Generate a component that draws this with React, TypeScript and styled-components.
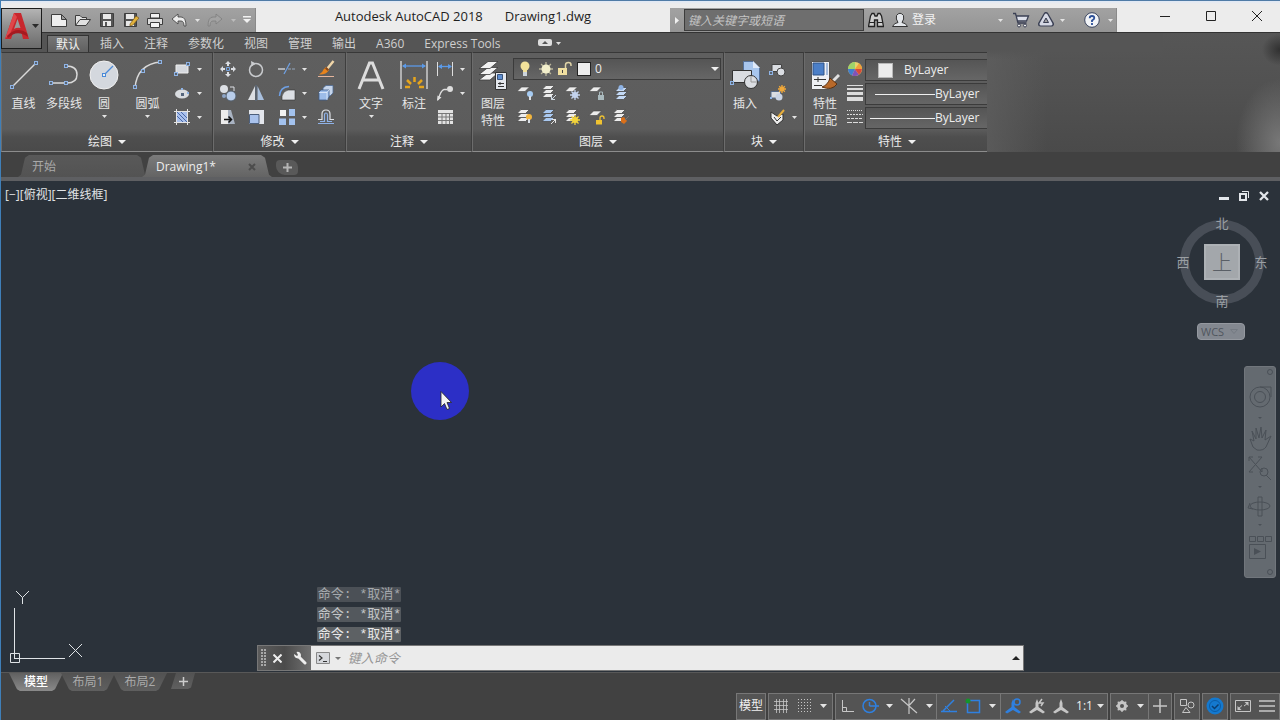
import React from "react";
import styled, { createGlobalStyle, css } from "styled-components";

const Global = createGlobalStyle`
  * { box-sizing: border-box; }
  html, body, #root { height: 100%; }
  body {
    margin: 0;
    background: #414141;
    font-family: "Open Sans", "Noto Sans CJK SC", sans-serif;
    font-size: 12px;
    line-height: 16px;
    color: #e0e0e0;
    overflow: hidden;
  }
  button, input, select {
    font: inherit;
    color: inherit;
    background: none;
    border: 0;
    padding: 0;
    margin: 0;
    appearance: none;
    outline: none;
  }
`;

/* ---------- frame ---------- */

const Window = styled.div`
  display: flex;
  flex-direction: column;
  height: 100vh;
  border-left: 1px solid #3f7fb8;
  border-top: 1px solid #4f7ba6;
`;

const TitleBar = styled.header`
  position: relative;
  display: flex;
  align-items: flex-end;
  height: 31px;
  flex: none;
  background: linear-gradient(#dfe8f6, #ececec 3px);
`;

const AppButton = styled.button`
  position: absolute;
  left: 0;
  top: 7px;
  z-index: 2;
  display: flex;
  align-items: center;
  gap: 2px;
  width: 41px;
  height: 41px;
  padding: 0 0 6px 3px;
  border: 1px solid #1c1c1c;
  background: linear-gradient(#b4b4b4, #8e8e8e 45%, #6c6c6c);
`;

const QuickBar = styled.div`
  display: flex;
  height: 24px;
  margin-left: 41px;
  padding-left: 5px;
  background: linear-gradient(#a2a2a2, #949494);
  border-right: 1px solid #8a8a8a;
`;

const ToolButton = styled.button<{ $w?: number }>`
  display: flex;
  align-items: center;
  justify-content: center;
  width: ${(p) => p.$w ?? 24}px;
  height: 24px;
  flex: none;
`;

const Title = styled.h1`
  display: flex;
  flex: 1;
  justify-content: center;
  gap: 22px;
  height: 24px;
  margin: 0;
  font-size: 13px;
  line-height: 16px;
  font-weight: 400;
  color: #1e1e1e;
  white-space: nowrap;
`;

const InfoBar = styled.div`
  display: flex;
  align-items: center;
  height: 24px;
  background: linear-gradient(#a2a2a2, #949494);
  border-right: 1px solid #8a8a8a;
`;

const SearchInput = styled.input`
  width: 180px;
  height: 22px;
  padding: 0 3px;
  background: #6e6e6e;
  border: 1px solid #3c3c3c;
  font-style: italic;
  &::placeholder { color: #c4c4c4; opacity: 1; }
`;

const SignIn = styled.button`
  width: 82px;
  height: 24px;
  text-align: left;
  color: #f2f2f2;
`;

const HelpGroup = styled.div`
  display: flex;
  margin-left: 12px;
`;

const WindowButtons = styled.div`
  display: flex;
  height: 31px;
  margin-left: 25px;
`;

const WindowButton = styled.button`
  display: flex;
  align-items: center;
  justify-content: center;
  width: 46px;
  height: 29px;
`;

/* ---------- ribbon ---------- */

const RibbonTabs = styled.nav`
  display: flex;
  align-items: flex-end;
  height: 20px;
  flex: none;
  padding-left: 46px;
  background: #555555;
  border-top: 1px solid #333;
`;

const RibbonTab = styled.button<{ $active?: boolean }>`
  height: 19px;
  padding: 0 8px;
  margin-right: 2px;
  line-height: 17px;
  color: #cfcfcf;
  border: 1px solid transparent;
  border-bottom: 0;
  white-space: nowrap;
  ${(p) =>
    p.$active &&
    css`
      height: 17px;
      color: #f2f2f2;
      background: linear-gradient(#767676, #606060);
      border-color: #333;
      line-height: 15px;
    `}
`;

const CollapseButton = styled.button`
  display: flex;
  align-items: center;
  height: 19px;
  padding: 0 20px 0 26px;
`;

const Ribbon = styled.div`
  display: flex;
  height: 100px;
  flex: none;
  background: #4f4f4f;
`;

const Panel = styled.section<{ $w: number }>`
  display: flex;
  flex-direction: column;
  width: ${(p) => p.$w}px;
  flex: none;
  border-top: 1px solid #383838;
  border-left: 1px solid #6c6c6c;
  border-right: 1px solid #3e3e3e;
  border-bottom: 1px solid #8c8c8c;
  background: linear-gradient(#5f5f5f, #5c5c5c 76px, #4e4e4e 84px, #4a4a4a);
  overflow: hidden;
`;

const PanelBody = styled.div`
  display: flex;
  flex: 1;
  padding-top: 4px;
`;

const PanelTitle = styled.button`
  display: flex;
  align-items: center;
  justify-content: center;
  gap: 6px;
  height: 20px;
  padding-top: 2px;
  line-height: 18px;
  color: #ececec;
`;

const BigButton = styled.button<{ $w?: number }>`
  display: flex;
  flex-direction: column;
  align-items: center;
  width: ${(p) => p.$w ?? 40}px;
  height: 74px;
  flex: none;
  padding-top: 2px;
  color: #e6e6e6;
  white-space: nowrap;
`;

const BigLabel = styled.span`
  margin: 4px 0 3px;
  line-height: 17px;
`;

const Column = styled.div`
  display: flex;
  flex-direction: column;
`;

const Row = styled.div`
  display: flex;
  align-items: center;
  height: 24px;
`;

const ModifyGrid = styled.div`
  display: grid;
  grid-template-columns: 28px 28px 38px 36px;
  grid-auto-rows: 24px;
  align-items: center;
  justify-items: center;
`;

const Combo = styled.label<{ $w?: number }>`
  display: flex;
  align-items: center;
  gap: 3px;
  height: 22px;
  margin: 1px 0;
  padding: 0 1px 0 3px;
  ${(p) => (p.$w ? `width: ${p.$w}px;` : "flex: 1;")}
  background: linear-gradient(#555, #666);
  border: 1px solid #3b3b3b;
  select { flex: 1; min-width: 0; height: 20px; color: #eee; }
`;

const PropertyCombo = styled(Combo)`
  flex: none;
  width: 130px;
  gap: 0;
  margin: 2px 0 0;
  padding: 0 0 0 4px;
  border-right: 0;
`;

const Swatch = styled.span`
  width: 15px;
  height: 15px;
  margin: 0 11px 0 8px;
  background: #ececec;
  border: 1px solid #b8b8b8;
`;

const LineSample = styled.span<{ $inset: number }>`
  width: ${(p) => 65 - p.$inset}px;
  height: 1px;
  margin-left: ${(p) => p.$inset}px;
  background: #f0f0f0;
`;

const Haze = styled.div`
  flex: 1;
  margin: -20px 0 0 -3px;
  background:
    linear-gradient(#555 17px, rgba(85, 85, 85, 0) 26px) 0 0 / 60% 100% no-repeat,
    linear-gradient(90deg, rgba(96, 96, 96, 0.7), rgba(96, 96, 96, 0) 60px),
    radial-gradient(18px 16px at 100% 14%, #303030, rgba(48, 48, 48, 0)),
    radial-gradient(44px 64px at 100% 92%, #787878, rgba(90, 90, 90, 0)),
    linear-gradient(#565656, #515151 50%, #4a4a4a);
  border-top: 1px solid #333;
`;

/* ---------- document tabs ---------- */

const FileTabs = styled.nav`
  display: flex;
  align-items: flex-end;
  height: 29px;
  flex: none;
  padding: 0 0 0 17px;
  background: #414141;
  border-bottom: 4px solid #5e5f62;
`;

const FileTab = styled.div<{ $active?: boolean }>`
  display: flex;
  align-items: center;
  width: 130px;
  height: 22px;
  margin-right: -6px;
  padding: 1px 16px 0 14px;
  justify-content: space-between;
  color: ${(p) => (p.$active ? "#ededed" : "#a9a9a9")};
  background: ${(p) => (p.$active ? "linear-gradient(#7b7b7b, #646464)" : "linear-gradient(#595959, #535353)")};
  clip-path: polygon(0 100%, 3px 90%, 7px 12%, 11px 0, 119px 0, 123px 12%, 127px 90%, 100% 100%);
  button { color: inherit; }
`;

const AddTab = styled.button`
  display: flex;
  align-items: center;
  justify-content: center;
  width: 22px;
  height: 15px;
  margin: 0 0 2px 10px;
  background: #595959;
  border-radius: 4px 7px 4px 9px;
`;

/* ---------- drawing area ---------- */

const Canvas = styled.main`
  position: relative;
  flex: 1;
  min-height: 0;
  background: #2b323a;
  overflow: hidden;
`;

const ViewHeader = styled.div`
  display: flex;
  justify-content: space-between;
  padding: 6px 8px 0 4px;
`;

const ViewLabel = styled.span`
  color: #e2e4e6;
`;

const ViewButtons = styled.div`
  display: flex;
  align-items: center;
  gap: 4px;
  button { display: flex; align-items: center; justify-content: center; width: 16px; height: 18px; }
`;

const ViewCube = styled.div`
  position: absolute;
  right: 11px;
  top: 33px;
  display: grid;
  grid-template-columns: 16px 1fr 16px;
  grid-template-rows: 18px 1fr 18px;
  place-items: center;
  width: 94px;
  height: 96px;
  color: #9a9fa4;
  font-size: 13px;
`;

const CompassRing = styled.span`
  position: absolute;
  left: 5px;
  top: 6px;
  width: 84px;
  height: 84px;
  border: 9px solid #484e57;
  border-radius: 50%;
`;

const Compass = styled.span<{ $col: number; $row: number }>`
  position: relative;
  grid-column: ${(p) => p.$col};
  grid-row: ${(p) => p.$row};
`;

const CubeFace = styled.button`
  position: relative;
  grid-column: 2;
  grid-row: 2;
  width: 36px;
  height: 36px;
  background: #a3a7ab;
  border: 2px solid #adb1b5;
  color: #5a5f66;
  font-family: "Noto Sans CJK SC", sans-serif;
  font-size: 20px;
  font-weight: 300;
  line-height: 28px;
`;

const WcsButton = styled.button`
  position: absolute;
  right: 35px;
  top: 142px;
  display: flex;
  align-items: center;
  gap: 6px;
  width: 48px;
  height: 17px;
  padding-left: 3px;
  font-size: 11px;
  background: #838890;
  border: 1px solid #9599a0;
  border-radius: 4px;
  color: #50565e;
`;

const NavBar = styled.div`
  position: absolute;
  right: 4px;
  top: 185px;
  display: flex;
  flex-direction: column;
  align-items: center;
  width: 32px;
  height: 212px;
  background: #646a70;
  border: 1px solid #71767c;
  border-radius: 3px;
`;

const Ucs = styled.svg`
  position: absolute;
  left: 8px;
  bottom: 8px;
`;

const Pointer = styled.svg`
  position: absolute;
  left: 410px;
  top: 181px;
`;

const CommandDock = styled.form`
  position: absolute;
  left: 20%;
  bottom: 1px;
  width: 60%;
`;

const History = styled.ol`
  display: flex;
  flex-direction: column;
  align-items: flex-start;
  gap: 5px;
  margin: 0 0 3px 60px;
  padding: 0;
  list-style: none;
  font-family: "Liberation Mono", "Noto Sans CJK SC", monospace;
  font-size: 13px;
  line-height: 15px;
`;

const HistoryLine = styled.li<{ $fade: number }>`
  height: 15px;
  padding: 0 0 0 1px;
  white-space: pre;
  border-radius: 1px;
  background: ${(p) => ["#5d6164", "#53585d", "#4b5056"][p.$fade]};
  color: ${(p) => ["#e8e8e8", "#c3c6c8", "#a5a9ad"][p.$fade]};
`;

const CommandLine = styled.div`
  display: flex;
  align-items: center;
  height: 26px;
  background: #ebebeb;
  border: 1px solid #777;
`;

const CommandGrip = styled.div`
  display: flex;
  align-items: center;
  width: 53px;
  height: 24px;
  flex: none;
  padding-left: 3px;
  background: linear-gradient(90deg, #5c5c5c, #4b4b4b 50%, #707070);
  button { width: 22px; height: 24px; display: flex; align-items: center; justify-content: center; }
`;

const CommandInput = styled.input`
  flex: 1;
  min-width: 0;
  margin-left: 7px;
  font-family: "Noto Sans CJK SC", sans-serif;
  font-size: 13px;
  font-style: italic;
  color: #333;
  &::placeholder { color: #969696; opacity: 1; }
`;

/* ---------- bottom ---------- */

const Bottom = styled.footer`
  display: flex;
  flex-direction: column;
  height: 48px;
  flex: none;
  background: #414141;
  border-top: 1px solid #585858;
`;

const LayoutTabs = styled.nav`
  display: flex;
  height: 20px;
  padding-left: 8px;
`;

const LayoutTab = styled.button<{ $active?: boolean }>`
  width: 54px;
  height: 18px;
  margin-right: -2px;
  line-height: 18px;
  text-align: center;
  color: ${(p) => (p.$active ? "#fff" : "#aaa")};
  font-weight: ${(p) => (p.$active ? 500 : 400)};
  background: ${(p) => (p.$active ? "linear-gradient(#606060, #8a8a8a)" : "linear-gradient(#525252, #5f5f5f)")};
  clip-path: polygon(0 0, 100% 0, 46px 90%, 43px 100%, 11px 100%, 8px 90%);
`;

const AddLayout = styled(LayoutTab)`
  display: flex;
  align-items: center;
  justify-content: center;
  width: 24px;
  height: 16px;
  margin-left: 6px;
  clip-path: polygon(5px 0, 100% 0, 20px 90%, 17px 100%, 0 100%);
`;

const StatusBar = styled.div`
  display: flex;
  justify-content: flex-end;
  gap: 2px;
  height: 27px;
`;

const StatusCell = styled.div`
  display: flex;
  align-items: center;
  height: 27px;
  background: #545454;
  border: 1px solid #777;
  & + &.joined { margin-left: -3px; }
`;

const StatusButton = styled.button<{ $w?: number }>`
  display: flex;
  align-items: center;
  justify-content: center;
  gap: 4px;
  width: ${(p) => p.$w ?? 24}px;
  height: 25px;
  padding-bottom: 2px;
  color: #f0f0f0;
  white-space: nowrap;
`;

/* ---------- drawings ---------- */

const Svg = styled.svg`
  display: block;
  flex: none;
`;

type IconProps = { w?: number; h?: number; children: React.ReactNode };
const Icon = ({ w = 18, h = 18, children }: IconProps) => (
  <Svg width={w} height={h} viewBox={`0 0 ${w} ${h}`} fill="none" aria-hidden>
    {children}
  </Svg>
);

const Caret = ({ s = 5, c = "#e4e4e4", up = false }: { s?: number; c?: string; up?: boolean }) => {
  const h = Math.ceil(s / 2);
  return (
    <Icon w={s} h={h}>
      <path d={up ? `M0 ${h} L${s / 2} 0 L${s} ${h} Z` : `M0 0 H${s} L${s / 2} ${h} Z`} fill={c} />
    </Icon>
  );
};

const Knots = ({ at, r = 2 }: { at: [number, number][]; r?: number }) => (
  <g fill="#5a6470" stroke="#8fb4e6">
    {at.map(([x, y]) => (
      <rect key={`${x}-${y}`} x={x - r + 0.5} y={y - r + 0.5} width={r * 2 - 1} height={r * 2 - 1} />
    ))}
  </g>
);

const Sheets = ({ x = 0, y = 0, c = "#ececec" }: { x?: number; y?: number; c?: string }) => (
  <g transform={`translate(${x} ${y})`} fill={c} stroke="#4a4a4a" strokeWidth=".8">
    <path d="M4 8.500 H12.500 L8.500 12.500 H0 Z" />
    <path d="M4 4.500 H12.500 L8.500 8.500 H0 Z" />
    <path d="M4 .5 H12.500 L8.500 4.500 H0 Z" />
  </g>
);

const Sheet = () => <path d="M5.500 3 H13.500 L9 7.500 H1 Z" fill="#ececec" stroke="#444" strokeWidth=".6" />;

const Sun = ({ x, y, r, c }: { x: number; y: number; r: number; c: string }) => (
  <g transform={`translate(${x} ${y})`}>
    <path
      d={[0, 45, 90, 135]
        .map((a) => {
          const dx = Math.cos((a * Math.PI) / 180) * r;
          const dy = Math.sin((a * Math.PI) / 180) * r;
          return `M${-dx} ${-dy} L${dx} ${dy}`;
        })
        .join(" ")}
      stroke={c}
      strokeWidth="1.3"
    />
    <circle r={r * 0.6} fill={c} />
  </g>
);

const Bulb = ({ x, y, c }: { x: number; y: number; c: string }) => (
  <g transform={`translate(${x} ${y})`}>
    <circle r="3" fill={c} />
    <path d="M-1 2 H1 V6 H-1 Z" fill="#d7dde4" />
  </g>
);

const Padlock = ({ x, y, c }: { x: number; y: number; c: string }) => (
  <g transform={`translate(${x} ${y})`}>
    <rect x="0" y="4" width="6" height="4.500" fill={c} />
    <path d="M4 4 V2 Q4 0 6 0 Q8 0 8 2 V3" stroke={c} strokeWidth="1.300" />
  </g>
);

const Logo = () => (
  <Icon w={25} h={28}>
    <path d="M9 1 H16 L24 27 H18 L16.500 20.500 Q12 18.500 8 21 L6 27 H0 Z" fill="#c8272d" />
    <path d="M12.500 7 L15.500 16 Q12 15 9 17 Z" fill="#9b9b9b" />
    <path d="M9 1 L12 5 L5 22 L0 27 Z" fill="#e0474a" />
    <path d="M2 24 Q12 14 22 21 L23 25 Q12 17 3 26 Z" fill="#a51a20" />
  </Icon>
);

const dark = "#3d3d3d";
const quickIcons: [string, React.ReactNode][] = [
  ["新建", <path d="M1.500 3.500 H11.500 L16.500 8.500 V15.500 H1.500 Z M11.500 3.500 V8.500 H16.500" fill="#eee" stroke={dark} />],
  ["打开", <path d="M1.500 14.500 V4.500 H6 L8 6.500 H12.500 V8 M1.500 14.500 L6 8.500 H16.500 L12 14.500 Z" fill="#e0e0e0" stroke={dark} />],
  ["保存", <><path d="M2.500 2.500 H15.500 V15.500 H2.500 Z" fill="#555" stroke={dark} /><path d="M5 3 H13 V8 H5 Z M5 10 H13 V15 H5 Z" fill="#e8e8e8" /><path d="M7 11 H9 V15 H7 Z" fill="#555" /></>],
  ["另存为", <><path d="M2.500 2.500 H14.500 V15.500 H2.500 Z" fill="#555" stroke={dark} /><path d="M4 3 H12 V8 H4 Z M4 10 H12 V15 H4 Z" fill="#e8e8e8" /><path d="M8 13 L14 5 L17 7 L11 14 L8 15 Z" fill="#e2b23c" stroke="#6b4c10" strokeWidth=".6" /></>],
  ["打印", <><path d="M4.500 2.500 H13.500 V7 H4.500 Z" fill="#f3f3f3" stroke={dark} /><path d="M1.500 7.500 H16.500 V13.500 H1.500 Z" fill="#dedede" stroke={dark} /><path d="M4.500 11.500 H13.500 V16.500 H4.500 Z" fill="#f3f3f3" stroke={dark} /></>],
];

const Undo = ({ c = "#ececec", o = dark, flip = false }: { c?: string; o?: string; flip?: boolean }) => (
  <Icon w={18} h={18}>
    <path
      transform={flip ? "translate(18 0) scale(-1 1)" : undefined}
      d="M2 8 L8 3 V6 H11 Q16 6 16 15 H14 Q14 10 11 10 H8 V13 Z"
      fill={c}
      stroke={o}
      strokeWidth=".8"
    />
  </Icon>
);

const tabs = ["插入", "注释", "参数化", "视图", "管理", "输出", "A360", "Express Tools"];

const Split = ({ label, children, caret = true }: { label: string; children: React.ReactNode; caret?: boolean }) => (
  <Row>
    <ToolButton $w={23} aria-label={label}>{children}</ToolButton>
    {caret && <ToolButton $w={12} aria-label={`${label}选项`}><Caret /></ToolButton>}
  </Row>
);

const Titled = ({ w, title, children }: { w: number; title: string; children: React.ReactNode }) => (
  <Panel $w={w}>
    <PanelBody>{children}</PanelBody>
    <PanelTitle>{title}<Caret s={8} c="#f0f0f0" /></PanelTitle>
  </Panel>
);

const DrawPanel = () => (
  <Titled w={212} title="绘图">
    <BigButton $w={43}>
      <Icon w={30} h={32}><path d="M3 28 L27 4" stroke="#d9d9d9" strokeWidth="1.500" /><Knots at={[[3, 28], [27, 4]]} /></Icon>
      <BigLabel>直线</BigLabel>
    </BigButton>
    <BigButton $w={38}>
      <Icon w={32} h={32}><path d="M2 24 H19 Q29 24 29 15.500 Q29 7 18 7" stroke="#d9d9d9" strokeWidth="1.500" /><Knots at={[[3, 24], [18, 24], [18, 7]]} /></Icon>
      <BigLabel>多段线</BigLabel>
    </BigButton>
    <BigButton $w={42}>
      <Icon w={32} h={32}>
        <circle cx="16" cy="16" r="14" fill="#d4d8de" stroke="#f0f0f0" />
        <path d="M16 16 L25 7" stroke="#4a8ad8" strokeWidth="1.200" />
        <rect x="14.500" y="14.500" width="3" height="3" stroke="#4a8ad8" fill="#eee" />
      </Icon>
      <BigLabel>圆</BigLabel>
      <Caret />
    </BigButton>
    <BigButton $w={45}>
      <Icon w={32} h={32}><path d="M3 29 Q5 5 29 3" stroke="#d9d9d9" strokeWidth="1.500" /><Knots at={[[3, 28], [11, 12], [28, 3]]} /></Icon>
      <BigLabel>圆弧</BigLabel>
      <Caret />
    </BigButton>
    <Column>
      <Split label="矩形"><Icon><path d="M3 5 H15 V13 H3 Z" fill="#d5d8dd" stroke="#eee" /><Knots at={[[3, 14], [15, 4]]} /></Icon></Split>
      <Split label="椭圆"><Icon><ellipse cx="9" cy="10" rx="7" ry="4.500" fill="#d9dce0" /><Knots at={[[9, 5], [15, 9]]} r={1} /><path d="M8 9 H11 V12 H8 Z" fill="#54657d" /></Icon></Split>
      <Split label="图案填充"><Icon><path d="M4 4 H14 V14 H4 Z" fill="#a9c0ec" /><path d="M4 8 L10 14 M4 4 L14 14 M8 4 L14 10" stroke="#4868a8" /><path d="M3.500 1 V17 M14.500 1 V17 M1 3.500 H17 M1 14.500 H17" stroke="#e4e4e4" /></Icon></Split>
    </Column>
  </Titled>
);

const ModifyPanel = () => {
  const w = "#dcdfe4";
  return (
    <Titled w={133} title="修改">
      <ModifyGrid>
        <ToolButton aria-label="移动"><Icon><path d="M9 1 L12 4 H10 V6 H8 V4 H6 Z M9 17 L12 14 H10 V12 H8 V14 H6 Z M1 9 L4 6 V8 H6 V10 H4 V12 Z M17 9 L14 6 V8 H12 V10 H14 V12 Z" fill={w} /><path d="M7.500 7.500 H10.500 V10.500 H7.500 Z" stroke="#77a4e0" /></Icon></ToolButton>
        <ToolButton aria-label="旋转"><Icon><circle cx="9" cy="10" r="6.500" stroke="#c9cbce" strokeWidth="1.500" /><path d="M4 1 L9 3.500 L4.500 6.500 Z" fill="#c9cbce" /></Icon></ToolButton>
        <Row><ToolButton $w={30} aria-label="修剪"><Icon><path d="M0 9 H7" stroke={w} strokeWidth="1.300" /><path d="M10 9 H18" stroke="#94a7bd" strokeDasharray="3 1" /><path d="M6 14 L12 3" stroke="#6f9fe0" strokeWidth="1.300" /></Icon></ToolButton><Caret /></Row>
        <ToolButton aria-label="删除"><Icon><path d="M16.500 1 L10 9" stroke="#f0d6a8" strokeWidth="2.500" /><path d="M9 7 L12 10 Q9 15 2 14.500 Q6 12 6.500 9.500 Z" fill="#e8841c" /><path d="M9.500 7 L12 9.500 L10.500 11 L8 8.500 Z" fill="#8a4a1c" /><path d="M1 16.500 H17" stroke="#e5b59c" /></Icon></ToolButton>

        <ToolButton aria-label="复制"><Icon><circle cx="5" cy="5" r="4" fill={w} /><path d="M11 3 H15 V7" stroke={w} /><circle cx="12" cy="12" r="5" fill="#b8cdea" stroke="#55616f" /><circle cx="5" cy="12" r="2" fill="#8da5c7" /></Icon></ToolButton>
        <ToolButton aria-label="镜像"><Icon><path d="M8 2 V16 H1 Z" fill={w} /><path d="M10.500 2 V16 H17 Z" fill="#a9c0de" /><path d="M9 1 V17" stroke="#5d7ba3" strokeWidth=".6" /></Icon></ToolButton>
        <Row><ToolButton $w={30} aria-label="圆角"><Icon><path d="M4 16 V12 Q5 7 10 6 H17 V16 Z" fill={w} stroke="#333" strokeWidth=".6" /><path d="M1.500 12 Q2 3 11 2.500" stroke="#6fa0e4" strokeWidth="1.500" /></Icon></ToolButton><Caret /></Row>
        <ToolButton aria-label="分解"><Icon><path d="M6 4 L9 1.500 H16 V9 L13 12 H6 Z" fill="#c6d5ea" stroke="#4e6c96" strokeWidth=".8" /><path d="M2 8 L4 6 H12 V13 L10 16 H2 Z" fill="#9dbce8" stroke="#3d5c88" strokeWidth=".8" /><path d="M2 8.500 H10 V16 M10 8.500 L12 6" stroke="#e4edf9" strokeWidth=".8" /></Icon></ToolButton>

        <ToolButton aria-label="拉伸"><Icon><path d="M2 2 H9 V16 H2 Z" fill="#ececec" /><path d="M9 2 L12 2 L16 16 H9 Z" fill="#a9b3c2" /><path d="M5 11.500 H12 M9.500 8.500 L12.500 11.500 L9.500 14.500" stroke="#111" strokeWidth="1.500" /></Icon></ToolButton>
        <ToolButton aria-label="缩放"><Icon><path d="M2 2 H17 V16 H2 Z" fill="#e3e6ec" /><path d="M2.500 6.500 H12 V15.500 H2.500 Z" fill="#a9c2ec" stroke="#4c5f7c" /></Icon></ToolButton>
        <Row><ToolButton $w={30} aria-label="阵列"><Icon><path d="M2 2 H8 V8 H2 Z" fill="#f2f2f2" /><path d="M11 1 H17 V8 H11 Z M1 10.500 H8 V17 H1 Z M11 10.500 H17 V17 H11 Z" fill="#a3c2ee" /></Icon></ToolButton><Caret /></Row>
        <ToolButton aria-label="偏移"><Icon><path d="M1 11.500 H5 V6 Q5 2 9 2 Q13 2 13 6 V11.500 H17" stroke={w} strokeWidth="1.200" /><path d="M1 15.500 H17 M3 13.500 H7.500 V7 Q7.500 5 9 5 Q10.500 5 10.500 7 V13.500 H15" stroke="#8fb2e8" strokeWidth="1.200" /></Icon></ToolButton>
      </ModifyGrid>
    </Titled>
  );
};

const AnnotatePanel = () => (
  <Titled w={126} title="注释">
    <BigButton $w={48}>
      <Icon w={30} h={32}><path d="M3 30 L13.500 4 H16.500 L27 30 M7.500 21 H22.500" stroke="#dcdcdc" strokeWidth="3" /></Icon>
      <BigLabel>文字</BigLabel>
      <Caret />
    </BigButton>
    <BigButton $w={38}>
      <Icon w={30} h={32}>
        <path d="M2 2 V30 M28 2 V30" stroke="#dedede" strokeWidth="1.300" />
        <path d="M4 7 H26" stroke="#5b9ae8" strokeWidth="1.300" /><path d="M3 7 L7 4.500 V9.500 Z M27 7 L23 4.500 V9.500 Z" fill="#5b9ae8" />
        <path d="M6 28 H11 M20 28 H25 M8 21 L12 25 M23 21 L19 25 M15.500 18 V23" stroke="#e6a51c" strokeWidth="2.500" />
      </Icon>
      <BigLabel>标注</BigLabel>
    </BigButton>
    <Column>
      <Split label="线性"><Icon><path d="M1.500 2 V16 M16.500 2 V16" stroke="#dedede" /><path d="M3 6.500 H15" stroke="#5b9ae8" strokeWidth="1.300" /><path d="M2 6.500 L6 4 V9 Z M16 6.500 L12 4 V9 Z" fill="#5b9ae8" /></Icon></Split>
      <Split label="引线"><Icon><path d="M2 16 Q5 6 8 5.500 H11" stroke="#dedede" strokeWidth="1.300" /><path d="M1 17 L1.500 11.500 L5.500 13.500 Z" fill="#dedede" /><circle cx="14" cy="5" r="3" fill="#dedede" /></Icon></Split>
      <Split label="表格" caret={false}><Icon><path d="M2 2 H17 V16 H2 Z" fill="#e2e2e2" /><path d="M2 5.500 H17 M2 9 H17 M2 12.500 H17 M6 5 V16 M10 5 V16 M13.500 5 V16" stroke="#777" /></Icon></Split>
    </Column>
  </Titled>
);

const layerTools: [string, React.ReactNode][] = [
  ["关", <><Sheet /><Bulb x={14} y={10} c="#a6cbf2" /></>],
  ["隔离", <><Sheets x={2} y={1} /><path d="M16 11 L11.500 15.500 M11.500 12 V15.500 H15" stroke="#cfd8e2" /></>],
  ["冻结", <><Sheet /><Sun x={11} y={11} r={5} c="#c3d3ee" /></>],
  ["锁定", <><Sheet /><path d="M10 11 H16 V16 H10 Z" fill="#a9b9bd" /><path d="M11.500 11 V8 H14.500 V11" stroke="#a9b9bd" /></>],
  ["置为当前", <><Sheets x={3} y={3} c="#c3d8f4" /><circle cx="9" cy="3.500" r="2.500" fill="#8fb4e6" /></>],
  ["打开全部", <><Sheets x={1} y={1} /><Bulb x={13} y={9} c="#f3b63e" /></>],
  ["取消隔离", <><Sheets x={2} y={1} c="#a9c8f0" /><path d="M11 16 L16 11 M12 11.500 H15.500 V15" stroke="#e4e4e4" /></>],
  ["解冻", <><Sheets x={1} y={1} /><Sun x={11} y={12} r={5} c="#f2d33a" /></>],
  ["解锁", <><Sheet /><Padlock x={8} y={8} c="#f0c331" /></>],
  ["匹配图层", <><Sheets x={1} y={1} /><path d="M9 10 L12 9 L15 13 L12 16 L9 14 Z" fill="#d9701b" /><path d="M13 12 L17 8" stroke="#777" /></>],
];

const LayerPanel = () => (
  <Titled w={252} title="图层">
    <BigButton $w={40}>
      <Icon w={30} h={32}>
        <g stroke="#3c3c3c" strokeWidth=".8" fill="#f2f2f2">
          <path d="M10 14 H20 L12 21 H1 Z" /><path d="M10 8.500 H20 L12 15.500 H1 Z" /><path d="M10 2.500 H20 L12 9.500 H1 Z" />
        </g>
        <path d="M17.500 13.500 H28.500 V30.500 H17.500 Z" fill="#e5e8ee" stroke="#333" />
        <path d="M19.500 15.500 H24.500 V20.500 H19.500 Z" fill="#5e8ed0" stroke="#38547d" /><path d="M20 24.500 H26 M20 27.500 H26 M22 23 V26" stroke="#333" />
      </Icon>
      <BigLabel>图层<br />特性</BigLabel>
    </BigButton>
    <Column>
      <Combo $w={208}>
        <Icon><circle cx="8" cy="6" r="4.500" fill="#f3e29a" /><path d="M6 9 H10 V12 H6 Z" fill="#f3e29a" /><path d="M6 12 H10 V16 H6 Z" fill="#ccd4dc" /></Icon>
        <Icon w={16}><Sun x={8} y={9} r={7} c="#b9b59a" /><circle cx="8" cy="9" r="4.500" fill="#f2eecb" /></Icon>
        <Icon w={16}><path d="M1 8 H10 V15 H1 Z" fill="#f0dfa0" /><path d="M8.500 8 V5 Q8.500 2.500 11.500 2.500 Q14 2.500 14 5 V6" stroke="#e0d4a8" strokeWidth="1.500" /><path d="M5 10 H6 V13 H5 Z" fill="#444" /></Icon>
        <Icon w={16}><rect x="1.500" y="2.500" width="13" height="13" fill="#ececec" stroke="#222" /></Icon>
        <select aria-label="图层"><option>0</option></select>
        <Caret s={8} c="#f0f0f0" />
      </Combo>
      {[0, 5].map((n) => (
        <Row key={n}>
          {layerTools.slice(n, n + 5).map(([label, art]) => (
            <ToolButton key={label} aria-label={label}><Icon>{art}</Icon></ToolButton>
          ))}
        </Row>
      ))}
    </Column>
  </Titled>
);

const BlockPanel = () => (
  <Titled w={80} title="块">
    <BigButton $w={40}>
      <Icon w={32} h={32}>
        <path d="M14.500 2.500 H24 L30.500 9 V22 H14.500 Z" fill="#a8c6ee" stroke="#55719a" /><path d="M24 2 V9 H31" fill="#e0eafa" />
        <path d="M3.500 11.500 H22.500 V23.500 H3.500 Z" fill="#dadde2" stroke="#333" />
        <circle cx="22" cy="23" r="6.500" fill="#dadde2" stroke="#333" /><path d="M22 23 V17 M22 23 H28" stroke="#999" /><Knots at={[[3, 24]]} />
      </Icon>
      <BigLabel>插入</BigLabel>
    </BigButton>
    <Column>
      <Split label="创建" caret={false}><Icon><path d="M4 4.500 H13.500 V11.500 H4 Z" fill="#dadde2" stroke="#444" /><circle cx="13" cy="12" r="4" fill="#dadde2" stroke="#444" /><Knots at={[[3, 13]]} /></Icon></Split>
      <Split label="编辑块" caret={false}><Icon><path d="M3 7.500 H12.500 V14 H3 Z" fill="#dadde2" stroke="#556a8a" /><circle cx="11" cy="13" r="3.500" fill="#c9d3e4" /><Knots at={[[3, 14]]} r={1} /><Sun x={14} y={5} r={4} c="#f0a83a" /></Icon></Split>
      <Split label="编辑属性"><Icon><path d="M3 4 L9 8 L15 6 V12 L9 17 L3 10 Z" fill="#ececec" stroke="#333" /><path d="M6 9 L9 13 L13 9" stroke="#333" /><path d="M10 9 L16 2" stroke="#e7ae3c" strokeWidth="2" /></Icon></Split>
    </Column>
  </Titled>
);

const PropertiesPanel = () => (
  <Titled w={186} title="特性">
    <BigButton $w={40}>
      <Icon w={30} h={32}>
        <path d="M1.500 2.500 H19.500 V30.500 H1.500 Z" fill="#eef0f4" stroke="#555" /><path d="M3 4 H14 V16 H3 Z" fill="#4b7fc8" stroke="#2e5286" /><path d="M16 4 H18 V16 H16 Z" fill="#a5bbdc" />
        <path d="M4 20.500 H16 M4 26.500 H12 M8 18 V23" stroke="#333" />
        <path d="M29 16 L23 22" stroke="#e0e0e0" strokeWidth="3" /><path d="M20 19 L27 25 Q22 32 12 28 Q18 26 20 19 Z" fill="#b8692a" stroke="#5c3110" />
      </Icon>
      <BigLabel>特性<br />匹配</BigLabel>
    </BigButton>
    <Column>
      <Row><ToolButton $w={20} aria-label="颜色"><Icon w={16} h={16}>
        <circle cx="8" cy="8" r="7" fill="#e9d36b" /><path d="M8 8 L8 1 A7 7 0 0 0 1 8 Z" fill="#9ed36a" /><path d="M8 8 H1 A7 7 0 0 0 5 14.400 Z" fill="#3f7fd0" /><path d="M8 8 L5 14.400 A7 7 0 0 0 12 13.700 Z" fill="#8153b8" /><path d="M8 8 L12 13.700 A7 7 0 0 0 15 8 Z" fill="#d84a3a" /><path d="M8 8 H15 A7 7 0 0 0 12 2.200 Z" fill="#f0a03a" />
      </Icon></ToolButton></Row>
      <Row><ToolButton $w={20} aria-label="线宽"><Icon w={16} h={16}><path d="M0 0 H16 V1 H0 Z M0 3 H16 V5 H0 Z M0 7 H16 V10 H0 Z M0 12 H16 V16 H0 Z" fill="#dcdcdc" /></Icon></ToolButton></Row>
      <Row><ToolButton $w={20} aria-label="线型"><Icon w={16} h={16}><path d="M0 1.500 H16" stroke="#dcdcdc" strokeDasharray="1 1" /><path d="M0 5.500 H16" stroke="#dcdcdc" strokeDasharray="2 1" /><path d="M0 9.500 H16" stroke="#dcdcdc" strokeDasharray="3 1" /><path d="M0 13.500 H16" stroke="#dcdcdc" strokeDasharray="5 1" /></Icon></ToolButton></Row>
    </Column>
    <Column>
      <PropertyCombo><Swatch /><select aria-label="颜色"><option>ByLayer</option></select></PropertyCombo>
      <PropertyCombo><LineSample $inset={5} /><select aria-label="线宽"><option>ByLayer</option></select></PropertyCombo>
      <PropertyCombo><LineSample $inset={0} /><select aria-label="线型"><option>ByLayer</option></select></PropertyCombo>
    </Column>
  </Titled>
);

const NavArt = () => (
  <Icon w={30} h={210}>
    <g stroke="#4a5057">
      <circle cx="25" cy="5" r="2.500" />
      <circle cx="15" cy="30" r="5.500" /><circle cx="15" cy="30" r="10" /><path d="M15 20 H26 V30" />
      <path d="M8 80 L5 72 L9 74 L7 64 L11 72 V61 L14 71 L16 60 L17 71 L21 63 L20 73 L26 69 L21 80 Q18 84 12 83 Z" />
      <path d="M4 90 L17 105 M17 90 L4 105 M4 90 H8 M4 90 V94 M17 90 H13 M4 105 H8 M17 105 V101 M21 108 L26 113" /><circle cx="19" cy="105" r="4" />
      <ellipse cx="15" cy="139" rx="10" ry="4" /><path d="M13 130 H17 V149 H13 Z M5 136 L3 141 L8 142" />
      <path d="M4.500 169.500 H10.500 V174.500 H4.500 Z M12.500 169.500 H18.500 V174.500 H12.500 Z M20.500 169.500 H26.500 V174.500 H20.500 Z M4.500 177.500 H20.500 V191.500 H4.500 Z" />
      <circle cx="25" cy="205" r="2.500" />
    </g>
    <path d="M13 50 H17 L15 52 Z M13 119 H17 L15 121 Z M13 157 H17 L15 159 Z M9 181 L16 184.500 L9 188 Z" fill="#4a5057" />
  </Icon>
);

const person = "M8 1 L9.500 5 V9 L16 14 L14 15.500 L8 12 L2 15.500 L0 14 L6.500 9 V5 Z";
const blue = "#2f80e0";
const gray = "#c6c6c6";

const Status = () => (
  <StatusBar>
    <StatusCell><StatusButton $w={28}>模型</StatusButton></StatusCell>
    <StatusCell>
      <StatusButton aria-label="栅格"><Icon w={16} h={16}><path d="M3.500 1 V15 M6.500 1 V15 M10.500 1 V15 M13.500 1 V15 M1 3.500 H15 M1 7.500 H15 M1 11.500 H15" stroke={gray} strokeWidth=".8" /></Icon></StatusButton>
      <StatusButton $w={22} aria-label="捕捉"><Icon w={16} h={16}>{[2, 5, 8, 11, 14].map((y) => <path key={y} d={`M2 ${y - 0.5} H15`} stroke={gray} strokeDasharray="1 2" />)}</Icon></StatusButton>
      <StatusButton $w={17} aria-label="捕捉选项"><Caret s={7} /></StatusButton>
    </StatusCell>
    <StatusCell>
      <StatusButton $w={22} aria-label="正交"><Icon w={16} h={16}><path d="M3.500 2 V13.500 H15 M3.500 9.500 H7.500 V13" stroke={gray} /></Icon></StatusButton>
      <StatusButton aria-label="极轴"><Icon w={18} h={16}><circle cx="8.500" cy="8" r="6.500" stroke={blue} strokeWidth="1.500" /><path d="M8.500 8 H18 M8.500 4 V8" stroke={blue} strokeWidth="1.500" /></Icon></StatusButton>
      <StatusButton $w={14} aria-label="极轴选项"><Caret s={7} /></StatusButton>
      <StatusButton $w={26} aria-label="等轴测"><Icon w={18} h={16}><path d="M1 1 L17 15 M9 0 V16 M9.500 7 L15 1" stroke={gray} strokeWidth="1.200" /></Icon></StatusButton>
      <StatusButton $w={14} aria-label="等轴测选项"><Caret s={7} /></StatusButton>
    </StatusCell>
    <StatusCell className="joined">
      <StatusButton aria-label="追踪"><Icon w={18} h={16}><path d="M14 2 L3 13 M1 13.500 H17" stroke={blue} strokeWidth="1.500" /><path d="M5 8 L10 13" stroke={blue} /></Icon></StatusButton>
      <StatusButton aria-label="对象捕捉"><Icon w={18} h={16}><path d="M3.500 2.500 H15.500 V14.500 H3.500 Z" stroke={blue} strokeWidth="1.500" /><circle cx="4" cy="3" r="2.500" fill="#15942b" /></Icon></StatusButton>
      <StatusButton $w={15} aria-label="捕捉模式"><Caret s={7} /></StatusButton>
    </StatusCell>
    <StatusCell className="joined">
      <StatusButton aria-label="注释可见"><Icon w={16} h={16}><path d={person} fill={blue} /><circle cx="12" cy="4" r="3" stroke={blue} strokeWidth="1.500" /></Icon></StatusButton>
      <StatusButton aria-label="自动缩放"><Icon w={16} h={16}><path d={person} fill={gray} /><path d="M13 1 L10 5 H14 L12 8" stroke={gray} strokeWidth="1.500" /></Icon></StatusButton>
      <StatusButton aria-label="注释比例"><Icon w={16} h={16}><path d={person} fill={gray} /></Icon></StatusButton>
      <StatusButton $w={34}>1:1<Caret s={7} /></StatusButton>
    </StatusCell>
    <StatusCell>
      <StatusButton $w={22} aria-label="工作空间"><Icon w={14} h={14}><Sun x={7} y={7} r={6} c={gray} /><circle cx="7" cy="7" r="5" fill={gray} /><circle cx="7" cy="7" r="2" fill="#545454" /></Icon></StatusButton>
      <StatusButton $w={15} aria-label="工作空间选项"><Caret s={7} /></StatusButton>
    </StatusCell>
    <StatusCell className="joined"><StatusButton $w={22} aria-label="监视器"><Icon w={16} h={16}><path d="M8 1 V15 M1 8 H15" stroke={gray} strokeWidth="1.500" /></Icon></StatusButton></StatusCell>
    <StatusCell><StatusButton aria-label="隔离对象"><Icon w={16} h={16}><path d="M1.500 1.500 H7.500 V7.500 H1.500 Z M7 9.500 L11 14.500 H3.500 Z" stroke={gray} /><circle cx="12" cy="7" r="3" stroke={gray} /></Icon></StatusButton></StatusCell>
    <StatusCell><StatusButton aria-label="硬件加速"><Icon w={18} h={18}><circle cx="9" cy="9" r="8.500" fill="#1479cf" /><circle cx="9" cy="9" r="5.500" stroke="#0b5ca5" /><path d="M6 9 L8.500 11.500 L12.500 7.500" stroke="#0a3d70" strokeWidth="1.500" /></Icon></StatusButton></StatusCell>
    <StatusCell>
      <StatusButton aria-label="全屏"><Icon w={16} h={16}><path d="M.5 2.500 H15.500 V13.500 H.5 Z M3 11 L7 7.500 M9 8 L13 5" stroke={gray} /><path d="M9.500 4 H13.500 V8 Z M2.500 8 V12 H6.500 Z" fill={gray} /></Icon></StatusButton>
      <StatusButton aria-label="自定义"><Icon w={16} h={16}><path d="M0 3 H16 M0 8 H16 M0 13 H16" stroke={gray} strokeWidth="1.500" /></Icon></StatusButton>
    </StatusCell>
  </StatusBar>
);

export default function App() {
  return (
    <Window>
      <Global />
      <TitleBar>
        <AppButton aria-label="应用程序"><Logo /><Caret s={7} c="#2b2b2b" /></AppButton>
        <QuickBar>
          {quickIcons.map(([label, art]) => (
            <ToolButton key={label} aria-label={label}><Icon>{art}</Icon></ToolButton>
          ))}
          <ToolButton aria-label="放弃"><Undo /></ToolButton>
          <ToolButton $w={12} aria-label="放弃列表"><Caret /></ToolButton>
          <ToolButton aria-label="重做"><Undo flip c="#a3a3a3" o="#7d7d7d" /></ToolButton>
          <ToolButton $w={12} aria-label="重做列表"><Caret c="#bcbcbc" /></ToolButton>
          <ToolButton $w={16} aria-label="自定义"><Icon w={8} h={8}><path d="M0 0 H8 V1.500 H0 Z M0 3 H8 L4 7 Z" fill="#f2f2f2" /></Icon></ToolButton>
        </QuickBar>
        <Title><span>Autodesk AutoCAD 2018</span><span>Drawing1.dwg</span></Title>
        <InfoBar>
          <ToolButton $w={14} aria-label="折叠"><Icon w={4} h={7}><path d="M0 0 L4 3.500 L0 7 Z" fill="#f0f0f0" /></Icon></ToolButton>
          <SearchInput aria-label="搜索" placeholder="键入关键字或短语" />
          <ToolButton aria-label="查找"><Icon w={16} h={16}><path d="M2.500 4 L4 1.500 H6 L7 4 H9 L10 1.500 H12 L13.500 4 L15.500 14.500 H9.500 V8 H6.500 V14.500 H.5 Z" fill="#cfcfcf" stroke="#222" strokeWidth="1.300" /><path d="M1 10.500 H6 M10 10.500 H15" stroke="#222" /></Icon></ToolButton>
          <ToolButton aria-label="用户"><Icon w={16} h={16}><path d="M.5 14.500 Q2 11 6 10.500 Q3.500 7 4.500 3.500 Q8 -1 11.500 3.500 Q12.500 7 10 10.500 Q14 11 15.500 14.500 Z" fill="#e3e6ea" stroke="#333" /></Icon></ToolButton>
          <SignIn>登录</SignIn>
          <ToolButton $w={12} aria-label="登录选项"><Caret /></ToolButton>
          <ToolButton $w={30} aria-label="应用商店"><Icon w={18} h={16}><path d="M3.500 4 H16.500 L14.500 9.500 H5.500 Z" fill="#dde0ea" /><path d="M1 1.500 H3.500 L6 11 H14.500 M4 4 H16.500 L14.500 9 H5.500" stroke="#3b4054" strokeWidth="1.300" /><circle cx="7" cy="13.500" r="1.500" fill="#eee" stroke="#3b4054" /><circle cx="13" cy="13.500" r="1.500" fill="#eee" stroke="#3b4054" /></Icon></ToolButton>
          <ToolButton $w={20} aria-label="保持连接"><Icon w={16} h={16}><path d="M8 2.500 L13.500 12 H2.500 Z" stroke="#3b4054" strokeWidth="5" strokeLinejoin="round" /><path d="M8 3 L13 12 H3 Z" stroke="#d5d8e4" strokeWidth="3" strokeLinejoin="round" /><path d="M8 6 L10.500 10.500 H5.500 Z" fill="#a0a0a0" stroke="#3b4054" /></Icon></ToolButton>
          <ToolButton $w={12} aria-label="连接选项"><Caret /></ToolButton>
          <HelpGroup>
            <ToolButton aria-label="帮助">
              <Icon w={16} h={16}><circle cx="8" cy="8" r="7.300" fill="#f2f4f7" stroke="#3c4660" /><path d="M5.700 6.300 Q5.700 4 8 4 Q10.300 4 10.300 6 Q10.300 7.300 8 8.500 V10 M8 11 V13" stroke="#2c4f97" strokeWidth="1.800" /></Icon>
            </ToolButton>
            <ToolButton $w={12} aria-label="帮助选项"><Caret /></ToolButton>
          </HelpGroup>
        </InfoBar>
        <WindowButtons>
          <WindowButton aria-label="最小化"><Icon w={10} h={10}><path d="M0 5.500 H10" stroke="#222" /></Icon></WindowButton>
          <WindowButton aria-label="最大化"><Icon w={10} h={10}><path d="M.5 .5 H9.500 V9.500 H.5 Z" stroke="#222" /></Icon></WindowButton>
          <WindowButton aria-label="关闭"><Icon w={10} h={10}><path d="M0 0 L10 10 M10 0 L0 10" stroke="#222" /></Icon></WindowButton>
        </WindowButtons>
      </TitleBar>

      <RibbonTabs>
        <RibbonTab $active>默认</RibbonTab>
        {tabs.map((t) => <RibbonTab key={t}>{t}</RibbonTab>)}
        <CollapseButton aria-label="最小化功能区">
          <Icon w={24} h={8}><path d="M2 0 H12 Q14 0 14 2 V5 Q14 7 12 7 H2 Q0 7 0 5 V2 Q0 0 2 0 Z" fill="#dedede" /><path d="M4 5 L7 2 L10 5 Z" fill="#555" /><path d="M18 3 H23 L20.500 6 Z" fill="#dedede" /></Icon>
        </CollapseButton>
      </RibbonTabs>

      <Ribbon>
        <DrawPanel />
        <ModifyPanel />
        <AnnotatePanel />
        <LayerPanel />
        <BlockPanel />
        <PropertiesPanel />
        <Haze />
      </Ribbon>

      <FileTabs>
        <FileTab><span>开始</span></FileTab>
        <FileTab $active>
          <span>Drawing1*</span>
          <button aria-label="关闭图形"><Icon w={8} h={8}><path d="M1 1 L7 7 M7 1 L1 7" stroke="#4c4c4c" strokeWidth="2" /></Icon></button>
        </FileTab>
        <AddTab aria-label="新图形"><Icon w={9} h={9}><path d="M4.500 0 V9 M0 4.500 H9" stroke="#b5b5b5" strokeWidth="2" /></Icon></AddTab>
      </FileTabs>

      <Canvas>
        <ViewHeader>
          <ViewLabel>[−][俯视][二维线框]</ViewLabel>
          <ViewButtons>
            <button aria-label="最小化视口"><Icon w={10} h={10}><path d="M0 6 H10 V9 H0 Z" fill="#e2e6ea" /></Icon></button>
            <button aria-label="还原视口"><Icon w={10} h={10}><path d="M1 3 H7 V9 H1 Z" stroke="#e2e6ea" strokeWidth="2" /><path d="M3 .5 H9.500 V7" stroke="#e2e6ea" /></Icon></button>
            <button aria-label="关闭视口"><Icon w={10} h={10}><path d="M1 1 L9 9 M9 1 L1 9" stroke="#e2e6ea" strokeWidth="2.300" /></Icon></button>
          </ViewButtons>
        </ViewHeader>

        <ViewCube>
          <CompassRing />
          <Compass $col={2} $row={1}>北</Compass>
          <Compass $col={1} $row={2}>西</Compass>
          <CubeFace>上</CubeFace>
          <Compass $col={3} $row={2}>东</Compass>
          <Compass $col={2} $row={3}>南</Compass>
        </ViewCube>
        <WcsButton>WCS<Icon w={8} h={5}><path d="M.5 .5 H7.500 L4 4.500 Z" stroke="#747a82" /></Icon></WcsButton>
        <NavBar><NavArt /></NavBar>

        <Pointer width="60" height="60" viewBox="0 0 60 60" aria-hidden>
          <circle cx="29" cy="29" r="29" fill="#2c2fc6" />
          <path d="M30 29.500 V45 L33.500 41.500 L36 47.500 L38.500 46.500 L36 40.500 H40.500 Z" fill="#f4f4f4" stroke="#222" strokeWidth=".8" />
        </Pointer>

        <Ucs width="76" height="76" viewBox="0 0 76 76" fill="none" stroke="#dfe3e6" aria-hidden>
          <path d="M5.500 20 V70 M5 70.500 H56 M1.500 65.500 H10.500 V74.500 H1.500 Z" />
          <path d="M7 3 L13.500 9.500 L20 3 M13.500 9.500 V16 M60 56 L73 69 M73 56 L60 69" />
        </Ucs>

        <CommandDock onSubmit={(e) => e.preventDefault()}>
          <History>
            {[2, 1, 0].map((fade) => <HistoryLine key={fade} $fade={fade}>命令: *取消*</HistoryLine>)}
          </History>
          <CommandLine>
            <CommandGrip>
              <Icon w={6} h={18}>{[0, 3, 6, 9, 12, 15].map((y) => <path key={y} d={`M0 ${y} H2 V${y + 2} H0 Z M3 ${y} H5 V${y + 2} H3 Z`} fill="#a8a8a8" />)}</Icon>
              <button type="button" aria-label="关闭"><Icon w={9} h={9}><path d="M.5 .5 L8.500 8.500 M8.500 .5 L.5 8.500" stroke="#eee" strokeWidth="2" /></Icon></button>
              <button type="button" aria-label="自定义"><Icon w={14} h={14}><path d="M6 6 L12 12" stroke="#eee" strokeWidth="3" strokeLinecap="round" /><path d="M1 3 L4 5 L5 4 L3.500 1 Q7 0 8 4 Q8 7 5 7.500 Q1 7 1 3 Z" fill="#eee" /></Icon></button>
            </CommandGrip>
            <ToolButton $w={24} type="button" aria-label="最近的命令"><Icon w={14} h={14}><path d="M.5 1.500 H13.500 V12.500 H.5 Z" fill="#d6d8dc" stroke="#888" /><path d="M3 4.500 L6 7 L3 9.500 M7 10.500 H11" stroke="#333" strokeWidth="1.200" /></Icon></ToolButton>
            <Caret c="#777" s={6} />
            <CommandInput aria-label="命令" placeholder="键入命令" />
            <ToolButton $w={14} type="button" aria-label="展开历史"><Caret up c="#222" s={8} /></ToolButton>
          </CommandLine>
        </CommandDock>
      </Canvas>

      <Bottom>
        <LayoutTabs>
          <LayoutTab $active>模型</LayoutTab>
          <LayoutTab>布局1</LayoutTab>
          <LayoutTab>布局2</LayoutTab>
          <AddLayout aria-label="新建布局"><Icon w={9} h={9}><path d="M4.500 0 V9 M0 4.500 H9" stroke="#ccc" strokeWidth="1.500" /></Icon></AddLayout>
        </LayoutTabs>
        <Status />
      </Bottom>
    </Window>
  );
}
